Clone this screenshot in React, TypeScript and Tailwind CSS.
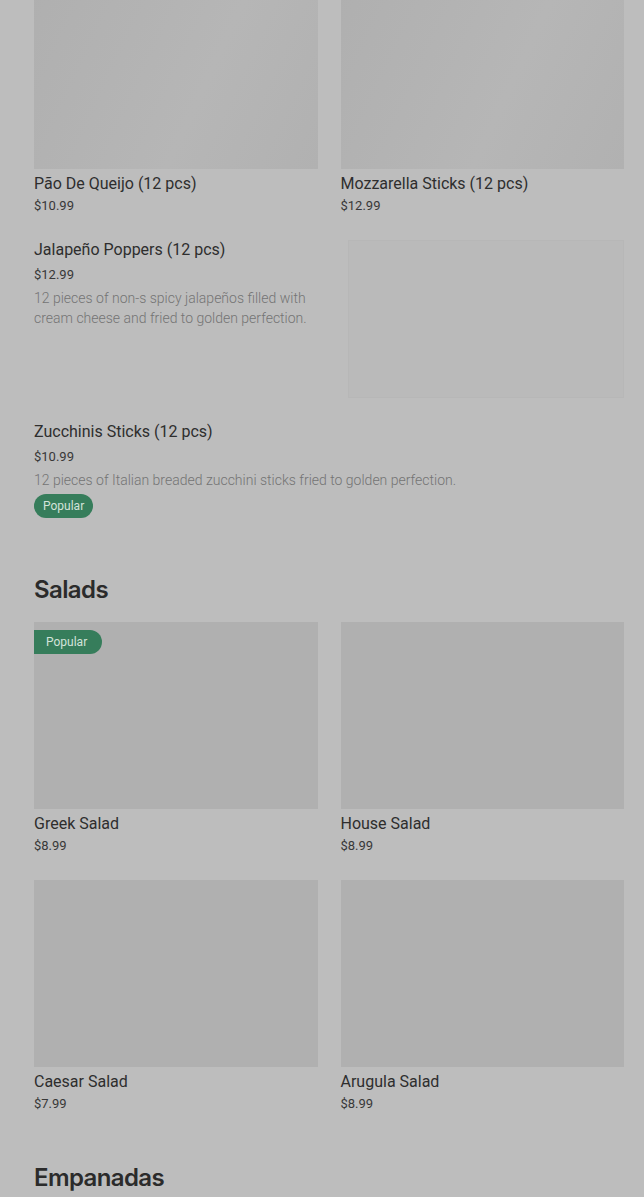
import React from "react";

type Item = { name: string; price: string; popular?: boolean };

const salads: Item[] = [
  { name: "Greek Salad", price: "$8.99", popular: true },
  { name: "House Salad", price: "$8.99" },
  { name: "Caesar Salad", price: "$7.99" },
  { name: "Arugula Salad", price: "$8.99" },
];

function GridCard({ item, imgH, shimmer }: { item: Item; imgH: string; shimmer?: boolean }) {
  return (
    <div className="flex flex-col">
      <div
        className={`relative w-full ${imgH} ${
          shimmer
            ? "bg-[linear-gradient(115deg,#afafaf_0%,#b3b3b3_35%,#b6b6b6_60%,#b1b1b1_100%)]"
            : "bg-[#b0b0b0]"
        }`}
      >
        {item.popular && (
          <span className="absolute left-0 top-2 flex h-6 items-center rounded-r-full bg-[#367d5b] pl-3 pr-[15px] text-[12px] text-[#d3e3da]">
            Popular
          </span>
        )}
      </div>
      <div className="mt-[5px] text-[16px] leading-5 text-[#2e2e2e]">{item.name}</div>
      <div className="mt-[3px] text-[13px] leading-[18px] text-[#383838]">{item.price}</div>
    </div>
  );
}

function ListItem({ name, price, desc, popular, image }: { name: string; price: string; desc: string; popular?: boolean; image?: boolean }) {
  return (
    <div className="flex gap-[26px]">
      <div className="flex flex-1 flex-col">
        <div className="text-[16px] leading-5 text-[#2e2e2e]">{name}</div>
        <div className="mt-1.5 text-[13px] leading-[18px] text-[#383838]">{price}</div>
        <div className="mt-1 text-[14px] leading-5 font-light text-[#747474]">{desc}</div>
        {popular && (
          <span className="mt-1 flex h-6 w-fit items-center rounded-full bg-[#367d5b] px-[9px] text-[12px] text-[#d3e3da]">
            Popular
          </span>
        )}
      </div>
      {image && <div className="h-[158px] w-[276px] shrink-0 border border-[#b7b7b7] bg-[#bababa]" />}
    </div>
  );
}

export default function App() {
  return (
    <div className="min-h-[1197px] overflow-hidden bg-[#bdbdbd] pl-[34px] pr-5 font-['Roboto',sans-serif]">
      <div className="-mt-[39px] grid grid-cols-2 gap-x-[23px]">
        <GridCard item={{ name: "Pão De Queijo (12 pcs)", price: "$10.99" }} imgH="h-[208px]" shimmer />
        <GridCard item={{ name: "Mozzarella Sticks (12 pcs)", price: "$12.99" }} imgH="h-[208px]" shimmer />
      </div>

      <div className="mt-[25px] flex flex-col gap-6">
        <ListItem
          name="Jalapeño Poppers (12 pcs)"
          price="$12.99"
          desc="12 pieces of non-s spicy jalapeños filled with cream cheese and fried to golden perfection."
          image
        />
        <ListItem
          name="Zucchinis Sticks (12 pcs)"
          price="$10.99"
          desc="12 pieces of Italian breaded zucchini sticks fried to golden perfection."
          popular
        />
      </div>

      <h2 className="mt-[56px] text-[24px] leading-8 font-semibold tracking-tight text-[#2b2b2b] font-['Inter',sans-serif]">
        Salads
      </h2>

      <div className="mt-4 grid grid-cols-2 gap-x-[23px] gap-y-[25px]">
        {salads.map((s) => (
          <GridCard key={s.name} item={s} imgH="h-[187px]" />
        ))}
      </div>

      <h2 className="mt-[49px] text-[24px] leading-8 font-semibold tracking-tight text-[#2b2b2b] font-['Inter',sans-serif]">
        Empanadas
      </h2>
    </div>
  );
}
